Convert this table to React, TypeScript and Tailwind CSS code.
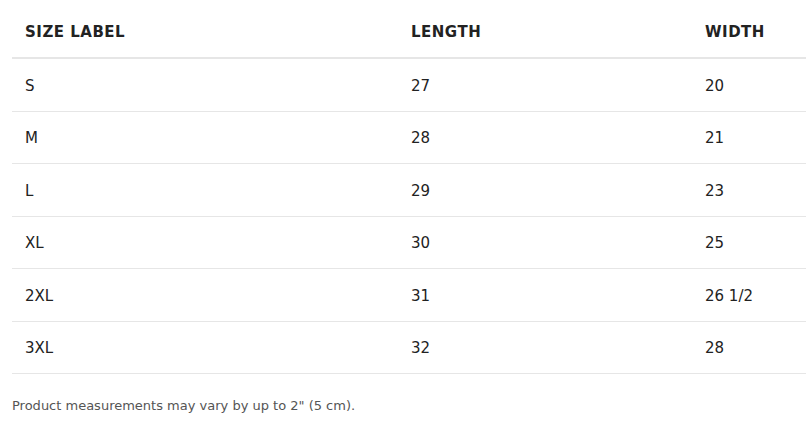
import React from "react";

const rows: [string, string, string][] = [
  ["S", "27", "20"],
  ["M", "28", "21"],
  ["L", "29", "23"],
  ["XL", "30", "25"],
  ["2XL", "31", "26 1/2"],
  ["3XL", "32", "28"],
];

export default function App() {
  return (
    <div className="w-[806px] h-[425px] bg-white overflow-hidden pl-[12px]" style={{ fontFamily: '"DejaVu Sans", sans-serif' }}>
      <div className="grid grid-cols-[386px_294px_1fr] h-[59px] items-center border-b-2 border-[#e6e6e6] text-[15px] font-bold text-[#222] tracking-[0.5px] pt-[7px]">
        <div className="pl-[13px]">SIZE LABEL</div>
        <div className="pl-[13px]">LENGTH</div>
        <div className="pl-[13px]">WIDTH</div>
      </div>
      {rows.map((r) => (
        <div key={r[0]} className="grid grid-cols-[386px_294px_1fr] h-[52.5px] items-center border-b border-[#e6e6e6] text-[15px] text-[#222] pt-[2px]">
          <div className="pl-[13px]">{r[0]}</div>
          <div className="pl-[13px]">{r[1]}</div>
          <div className="pl-[13px]">{r[2]}</div>
        </div>
      ))}
      <div className="mt-[22px] text-[13px] text-[#555]">Product measurements may vary by up to 2" (5 cm).</div>
    </div>
  );
}
